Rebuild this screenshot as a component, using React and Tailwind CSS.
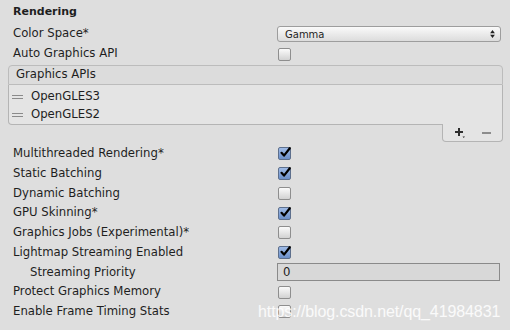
import React from 'react'

const settings = [
  { label: 'Multithreaded Rendering*', checked: true },
  { label: 'Static Batching', checked: true },
  { label: 'Dynamic Batching', checked: false },
  { label: 'GPU Skinning*', checked: true },
  { label: 'Graphics Jobs (Experimental)*', checked: false },
  { label: 'Lightmap Streaming Enabled', checked: true },
  { label: 'Streaming Priority', field: '0' },
  { label: 'Protect Graphics Memory', checked: false },
  { label: 'Enable Frame Timing Stats', checked: false },
]

function Checkbox({ checked }) {
  if (checked) {
    return (
      <div className="relative w-[13px] h-[13px] rounded-[2px] border border-[#5d6f8c] bg-gradient-to-b from-[#9fbbe6] to-[#6b8fc9]">
        <svg viewBox="0 0 13 13" className="absolute left-[0px] top-[-2px] w-[13px] h-[13px]">
          <path d="M2.5 6.8 L5 9.6 L10.8 2.2" fill="none" stroke="#000" strokeWidth="2.2" strokeLinecap="round" strokeLinejoin="round" />
        </svg>
      </div>
    )
  }
  return <div className="w-[13px] h-[13px] rounded-[2px] border border-[#8e8e8e] bg-gradient-to-b from-[#fbfbfb] to-[#d2d2d2]" />
}

function Row({ children, right, className = 'h-5' }) {
  return (
    <div className={`flex items-center ${className}`}>
      <div className="w-[264px] shrink-0">{children}</div>
      <div className="flex-1 pr-[9px]">{right}</div>
    </div>
  )
}

export default function App() {
  return (
    <div className="relative w-[510px] h-[330px] bg-[#dedede] text-[#1e1e1e] text-[11.7px] overflow-hidden" style={{ fontFamily: '"DejaVu Sans", sans-serif' }}>
      <div className="pt-[2px] pl-[13px]">
        <div className="h-5 flex items-center font-bold text-[11px]">Rendering</div>
      </div>

      <div className="pl-[13px] mt-[2px]">
        <Row right={
          <div className="h-[16px] rounded-[3px] border border-[#9d9d9d] bg-gradient-to-b from-[#fafafa] to-[#dcdcdc] flex items-center justify-between pl-[7px] pr-[5px] text-[10px]">
            <span>Gamma</span>
            <svg viewBox="0 0 6 10" className="w-[5px] h-[8px]">
              <path d="M3 0 L6 4 L0 4 Z M0 6 L6 6 L3 10 Z" fill="#222" />
            </svg>
          </div>
        }>Color Space*</Row>
        <Row right={<div className="pl-[1px]"><Checkbox checked={false} /></div>}>Auto Graphics API</Row>
      </div>

      <div className="mx-[8px] mt-[1px] w-[495px]">
        <div className="h-[20px] border border-[#bcbcbc] rounded-t-[4px] bg-[#dcdcdc] flex items-center pl-[7px]">Graphics APIs</div>
        <div className="h-[40px] border-x border-b border-[#b4b4b4] bg-[#e4e4e4] rounded-bl-[4px] pt-[3px] flex flex-col">
          {['OpenGLES3', 'OpenGLES2'].map((n) => (
            <div key={n} className="h-[18px] flex items-center">
              <div className="w-[11px] ml-[3px] mr-[8px] flex flex-col gap-[2px]">
                <div className="h-px bg-[#8a8a8a]" />
                <div className="h-px bg-[#8a8a8a]" />
              </div>
              <span>{n}</span>
            </div>
          ))}
        </div>
        <div className="flex justify-end">
          <div className="w-[61px] h-[18px] -mt-px border-x border-b border-[#b4b4b4] rounded-b-[4px] bg-[#e4e4e4] flex items-center">
            <div className="relative ml-[11px] w-[11px] h-[11px]">
              <svg viewBox="0 0 11 11" className="w-[11px] h-[11px]">
                <path d="M1 5 H9 M5 1 V9" stroke="#2e2e2e" strokeWidth="2" />
                <path d="M8.5 9.5 H11 L9.75 11 Z" fill="#2e2e2e" />
              </svg>
            </div>
            <div className="ml-[17px] w-[9px] h-[2px] bg-[#8c8c8c]" />
          </div>
        </div>
      </div>

      <div className="pl-[13px] mt-[2px]">
        {settings.map((s) => (
          <Row
            key={s.label}
            className="h-[19.75px]"
            right={
              s.field !== undefined ? (
                <div className="h-[18px] border border-[#8a8a8a] bg-[#d8d8d8] flex items-center pl-[5px] mr-[1px]">{s.field}</div>
              ) : (
                <div className="pl-[1px]"><Checkbox checked={s.checked} /></div>
              )
            }
          >
            <span className={s.field !== undefined ? 'pl-[17px]' : ''}>{s.label}</span>
          </Row>
        ))}
      </div>

      <div className="absolute left-[258px] top-[300px] text-white/85 text-[16px] tracking-[-0.1px]" style={{ fontFamily: '"Liberation Sans", sans-serif' }}>
        https://blog.csdn.net/qq_41984831
      </div>
    </div>
  )
}
